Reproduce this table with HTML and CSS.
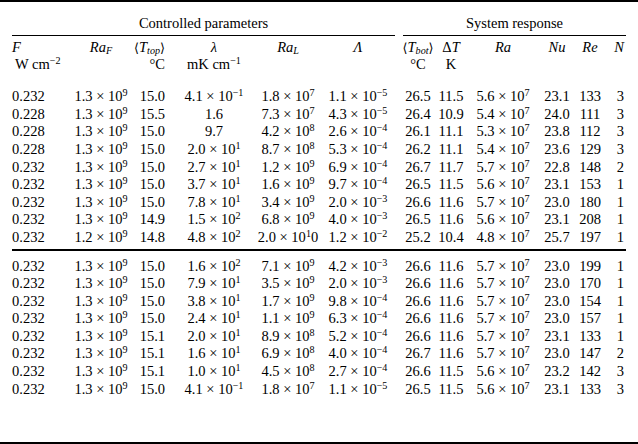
FILE: index.html
```html
<!DOCTYPE html>
<html>
<head>
<meta charset="utf-8">
<link rel="stylesheet" href="styles.css">
</head>
<body>
<div class="table">
  <div class="row spanners">
    <div class="span-ctrl">Controlled parameters</div>
    <div class="span-sys">System response</div>
  </div>
  <div class="row cmid">
    <div class="span-ctrl rule"></div>
    <div class="span-sys rule"></div>
  </div>
  <div class="row head">
    <span><i>F</i></span>
    <span><i>Ra<sub>F</sub></i></span>
    <span><span class="br">⟨</span><i>T<sub>top</sub></i><span class="br">⟩</span></span>
    <span><i>λ</i></span>
    <span><i>Ra<sub>L</sub></i></span>
    <span><i>Λ</i></span>
    <span><span class="br">⟨</span><i>T<sub>bot</sub></i><span class="br">⟩</span></span>
    <span>Δ<i>T</i></span>
    <span><i>Ra</i></span>
    <span><i>Nu</i></span>
    <span><i>Re</i></span>
    <span><i>N</i></span>
  </div>
  <div class="row head units">
    <span class="unit-f">W cm<sup>−2</sup></span>
    <span></span>
    <span>°C</span>
    <span>mK cm<sup>−1</sup></span>
    <span></span>
    <span></span>
    <span>°C</span>
    <span>K</span>
    <span></span>
    <span></span>
    <span></span>
    <span></span>
  </div>

  <div class="group first">
    <div class="row"><span>0.232</span><span>1.3 × 10<sup>9</sup></span><span>15.0</span><span>4.1 × 10<sup>−1</sup></span><span>1.8 × 10<sup>7</sup></span><span>1.1 × 10<sup>−5</sup></span><span>26.5</span><span>11.5</span><span>5.6 × 10<sup>7</sup></span><span>23.1</span><span>133</span><span>3</span></div>
    <div class="row"><span>0.228</span><span>1.3 × 10<sup>9</sup></span><span>15.5</span><span>1.6</span><span>7.3 × 10<sup>7</sup></span><span>4.3 × 10<sup>−5</sup></span><span>26.4</span><span>10.9</span><span>5.4 × 10<sup>7</sup></span><span>24.0</span><span>111</span><span>3</span></div>
    <div class="row"><span>0.228</span><span>1.3 × 10<sup>9</sup></span><span>15.0</span><span>9.7</span><span>4.2 × 10<sup>8</sup></span><span>2.6 × 10<sup>−4</sup></span><span>26.1</span><span>11.1</span><span>5.3 × 10<sup>7</sup></span><span>23.8</span><span>112</span><span>3</span></div>
    <div class="row"><span>0.228</span><span>1.3 × 10<sup>9</sup></span><span>15.0</span><span>2.0 × 10<sup>1</sup></span><span>8.7 × 10<sup>8</sup></span><span>5.3 × 10<sup>−4</sup></span><span>26.2</span><span>11.1</span><span>5.4 × 10<sup>7</sup></span><span>23.6</span><span>129</span><span>3</span></div>
    <div class="row"><span>0.232</span><span>1.3 × 10<sup>9</sup></span><span>15.0</span><span>2.7 × 10<sup>1</sup></span><span>1.2 × 10<sup>9</sup></span><span>6.9 × 10<sup>−4</sup></span><span>26.7</span><span>11.7</span><span>5.7 × 10<sup>7</sup></span><span>22.8</span><span>148</span><span>2</span></div>
    <div class="row"><span>0.232</span><span>1.3 × 10<sup>9</sup></span><span>15.0</span><span>3.7 × 10<sup>1</sup></span><span>1.6 × 10<sup>9</sup></span><span>9.7 × 10<sup>−4</sup></span><span>26.5</span><span>11.5</span><span>5.6 × 10<sup>7</sup></span><span>23.1</span><span>153</span><span>1</span></div>
    <div class="row"><span>0.232</span><span>1.3 × 10<sup>9</sup></span><span>15.0</span><span>7.8 × 10<sup>1</sup></span><span>3.4 × 10<sup>9</sup></span><span>2.0 × 10<sup>−3</sup></span><span>26.6</span><span>11.6</span><span>5.7 × 10<sup>7</sup></span><span>23.0</span><span>180</span><span>1</span></div>
    <div class="row"><span>0.232</span><span>1.3 × 10<sup>9</sup></span><span>14.9</span><span>1.5 × 10<sup>2</sup></span><span>6.8 × 10<sup>9</sup></span><span>4.0 × 10<sup>−3</sup></span><span>26.5</span><span>11.6</span><span>5.6 × 10<sup>7</sup></span><span>23.1</span><span>208</span><span>1</span></div>
    <div class="row"><span>0.232</span><span>1.2 × 10<sup>9</sup></span><span>14.8</span><span>4.8 × 10<sup>2</sup></span><span>2.0 × 10<sup>1</sup>0</span><span>1.2 × 10<sup>−2</sup></span><span>25.2</span><span>10.4</span><span>4.8 × 10<sup>7</sup></span><span>25.7</span><span>197</span><span>1</span></div>
  </div>

  <div class="midrule"></div>

  <div class="group second">
    <div class="row"><span>0.232</span><span>1.3 × 10<sup>9</sup></span><span>15.0</span><span>1.6 × 10<sup>2</sup></span><span>7.1 × 10<sup>9</sup></span><span>4.2 × 10<sup>−3</sup></span><span>26.6</span><span>11.6</span><span>5.7 × 10<sup>7</sup></span><span>23.0</span><span>199</span><span>1</span></div>
    <div class="row"><span>0.232</span><span>1.3 × 10<sup>9</sup></span><span>15.0</span><span>7.9 × 10<sup>1</sup></span><span>3.5 × 10<sup>9</sup></span><span>2.0 × 10<sup>−3</sup></span><span>26.6</span><span>11.6</span><span>5.7 × 10<sup>7</sup></span><span>23.0</span><span>170</span><span>1</span></div>
    <div class="row"><span>0.232</span><span>1.3 × 10<sup>9</sup></span><span>15.0</span><span>3.8 × 10<sup>1</sup></span><span>1.7 × 10<sup>9</sup></span><span>9.8 × 10<sup>−4</sup></span><span>26.6</span><span>11.6</span><span>5.7 × 10<sup>7</sup></span><span>23.0</span><span>154</span><span>1</span></div>
    <div class="row"><span>0.232</span><span>1.3 × 10<sup>9</sup></span><span>15.0</span><span>2.4 × 10<sup>1</sup></span><span>1.1 × 10<sup>9</sup></span><span>6.3 × 10<sup>−4</sup></span><span>26.6</span><span>11.6</span><span>5.7 × 10<sup>7</sup></span><span>23.0</span><span>157</span><span>1</span></div>
    <div class="row"><span>0.232</span><span>1.3 × 10<sup>9</sup></span><span>15.1</span><span>2.0 × 10<sup>1</sup></span><span>8.9 × 10<sup>8</sup></span><span>5.2 × 10<sup>−4</sup></span><span>26.6</span><span>11.6</span><span>5.7 × 10<sup>7</sup></span><span>23.1</span><span>133</span><span>1</span></div>
    <div class="row"><span>0.232</span><span>1.3 × 10<sup>9</sup></span><span>15.1</span><span>1.6 × 10<sup>1</sup></span><span>6.9 × 10<sup>8</sup></span><span>4.0 × 10<sup>−4</sup></span><span>26.7</span><span>11.6</span><span>5.7 × 10<sup>7</sup></span><span>23.0</span><span>147</span><span>2</span></div>
    <div class="row"><span>0.232</span><span>1.3 × 10<sup>9</sup></span><span>15.1</span><span>1.0 × 10<sup>1</sup></span><span>4.5 × 10<sup>8</sup></span><span>2.7 × 10<sup>−4</sup></span><span>26.6</span><span>11.5</span><span>5.6 × 10<sup>7</sup></span><span>23.2</span><span>142</span><span>3</span></div>
    <div class="row"><span>0.232</span><span>1.3 × 10<sup>9</sup></span><span>15.0</span><span>4.1 × 10<sup>−1</sup></span><span>1.8 × 10<sup>7</sup></span><span>1.1 × 10<sup>−5</sup></span><span>26.5</span><span>11.5</span><span>5.6 × 10<sup>7</sup></span><span>23.1</span><span>133</span><span>3</span></div>
  </div>
</div>
</body>
</html>
```

FILE: styles.css
```css
html, body {
  margin: 0;
  padding: 0;
  background: #ffffff;
}

body {
  font-family: "Liberation Serif", "DejaVu Serif", serif;
  font-size: 14.5px;
  color: #000000;
}

.table {
  box-sizing: border-box;
  width: 638px;
  height: 444px;
  border-top: 2px solid #000;
  border-bottom: 2px solid #000;
  padding: 12.5px 12px 0 12px;
}

.row {
  display: grid;
  grid-template-columns: 57px 64px 33px 96px 52px 88px 32px 34px 70px 38px 28px 22px;
  height: 17.6px;
  line-height: 17.6px;
  align-items: center;
}

.row > span {
  justify-self: center;
  white-space: nowrap;
}

.row > span:nth-child(1) {
  justify-self: start;
}

.row > span:nth-child(3) {
  justify-self: end;
  padding-right: 1px;
}

.row > span:nth-child(12) {
  justify-self: end;
  padding-right: 2px;
}

.spanners > div {
  text-align: center;
  white-space: nowrap;
}

.span-ctrl {
  grid-column: 1 / 7;
  margin-right: 7px;
}

.span-sys {
  grid-column: 7 / 13;
  margin-left: 1px;
}

.row.cmid {
  height: auto;
  line-height: 0;
  margin-top: 3.4px;
}

.rule {
  height: 1px;
  background: #000;
}

.row.head {
  height: 17px;
  line-height: 17px;
}

.row.head:nth-of-type(3) {
  margin-top: 3px;
}

.br {
  font-family: "DejaVu Serif", serif;
  font-size: 0.88em;
  line-height: 0;
}

.unit-f {
  padding-left: 3px;
}

.group.first {
  margin-top: 14.7px;
}

.midrule {
  height: 2px;
  background: #000;
  margin-top: 2.5px;
}

.group.second {
  margin-top: 6.5px;
}

i {
  font-style: italic;
}

sup {
  font-size: 0.7em;
  line-height: 0;
  vertical-align: 0.45em;
}

sub {
  font-size: 0.7em;
  line-height: 0;
  vertical-align: -0.18em;
}
```
